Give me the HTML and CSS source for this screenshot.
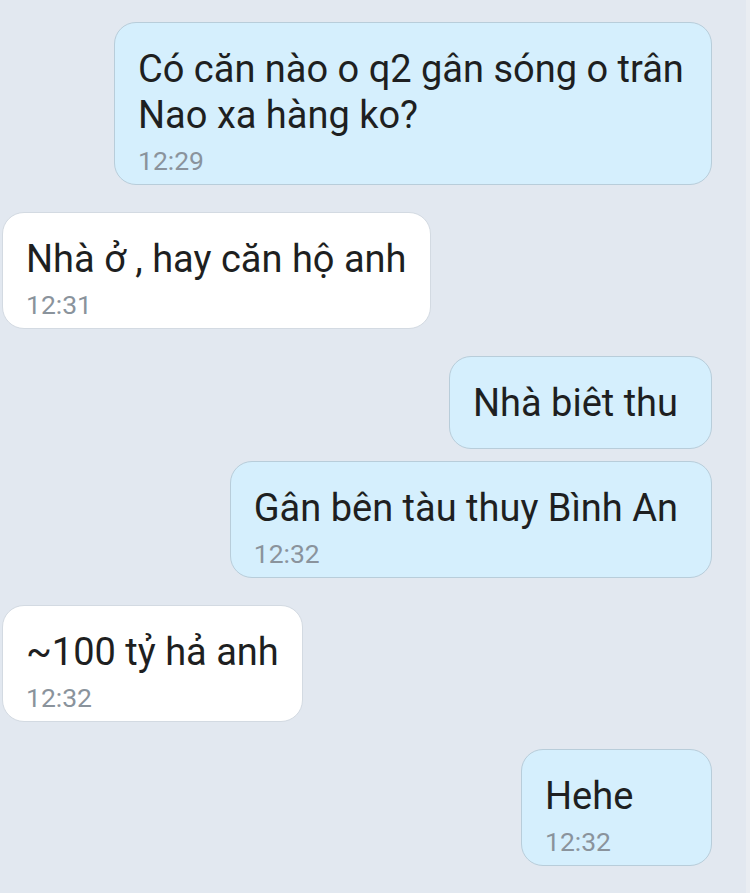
FILE: index.html
```html
<!DOCTYPE html>
<html lang="vi">
<head>
<meta charset="utf-8">
<link rel="stylesheet" href="styles.css">
</head>
<body>
<div class="chat">
  <div class="msg out">
    <div class="bubble wide">
      <div class="text">Có căn nào o q2 gân sóng o trân Nao xa hàng ko?</div>
      <div class="time">12:29</div>
    </div>
  </div>
  <div class="msg in">
    <div class="bubble">
      <div class="text">Nhà ở , hay căn hộ anh</div>
      <div class="time">12:31</div>
    </div>
  </div>
  <div class="msg out">
    <div class="bubble solo pad-r">
      <div class="text">Nhà biêt thu</div>
    </div>
  </div>
  <div class="msg out cont">
    <div class="bubble pad-r">
      <div class="text">Gân bên tàu thuy Bình An</div>
      <div class="time">12:32</div>
    </div>
  </div>
  <div class="msg in">
    <div class="bubble">
      <div class="text">~100 tỷ hả anh</div>
      <div class="time">12:32</div>
    </div>
  </div>
  <div class="msg out">
    <div class="bubble short">
      <div class="text">Hehe</div>
      <div class="time">12:32</div>
    </div>
  </div>
  <div class="msg in">
    <div class="bubble partial"></div>
  </div>
</div>
</body>
</html>
```
FILE: styles.css
```css
html, body {
  margin: 0;
  padding: 0;
  background: #e2e8f0;
  height: 100%;
  overflow: hidden;
}
body {
  font-family: Roboto, "Noto Sans", "Liberation Sans", sans-serif;
  color: #1e1f21;
}
.chat {
  display: flex;
  flex-direction: column;
  padding: 22px 34px 0 2px;
  border-right: 4px solid #e9edf2;
  width: 710px;
  min-height: 893px;
  box-sizing: content-box;
}
.msg {
  display: flex;
  margin-top: 27px;
}
.msg:first-child { margin-top: 0; }
.msg.cont { margin-top: 12px; }
.msg.out { justify-content: flex-end; }
.msg.in { justify-content: flex-start; }
.bubble {
  border: 1px solid #d3dae2;
  background: #ffffff;
  border-radius: 22px;
  padding: 23px 23px 8px 23px;
}
.msg.out .bubble {
  background: #d5effd;
  border-color: #b8cdda;
}
.bubble.wide { max-width: 550px; }
.bubble.solo { padding-bottom: 22px; }
.bubble.pad-r { padding-right: 33px; }
.bubble.short { min-width: 143px; }
.bubble.partial {
  width: 426px;
  height: 60px;
}
.text {
  font-size: 38px;
  line-height: 46px;
}
.time {
  font-size: 26.5px;
  line-height: 30px;
  margin-top: 8px;
  color: #8a939c;
}
```
